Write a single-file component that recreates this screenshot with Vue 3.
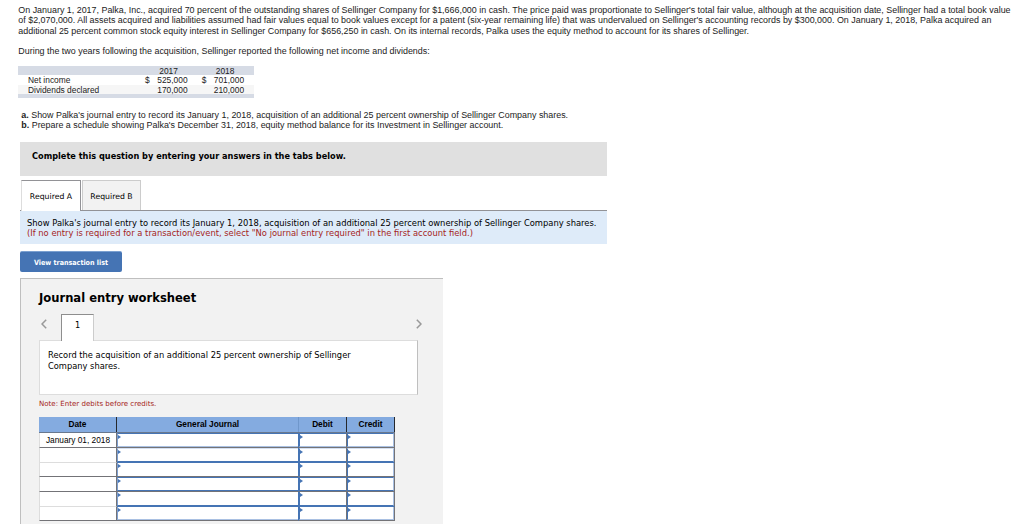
<script setup>
import { ref } from 'vue'

const intro = [
  "On January 1, 2017, Palka, Inc., acquired 70 percent of the outstanding shares of Sellinger Company for $1,666,000 in cash. The price paid was proportionate to Sellinger's total fair value, although at the acquisition date, Sellinger had a total book value",
  "of $2,070,000. All assets acquired and liabilities assumed had fair values equal to book values except for a patent (six-year remaining life) that was undervalued on Sellinger's accounting records by $300,000. On January 1, 2018, Palka acquired an",
  'additional 25 percent common stock equity interest in Sellinger Company for $656,250 in cash. On its internal records, Palka uses the equity method to account for its shares of Sellinger.',
]

const tabs = ['Required A', 'Required B']
const activeTab = ref('Required A')

const rows = [
  { id: 1, date: 'January 01, 2018' },
  { id: 2, date: '' },
  { id: 3, date: '' },
  { id: 4, date: '' },
  { id: 5, date: '' },
  { id: 6, date: '' },
]
const fields = ['account', 'debit', 'credit']
</script>

<template>
  <main class="page">
    <section class="problem">
      <p v-for="(line, i) in intro" :key="i">{{ line }}</p>
      <p class="lead">During the two years following the acquisition, Sellinger reported the following net income and dividends:</p>

      <div class="figures">
        <div class="fig-row fig-head"><span></span><span></span><span class="year">2017</span><span></span><span class="year">2018</span></div>
        <div class="fig-row"><span class="name">Net income</span><span>$</span><span>525,000</span><span>$</span><span>701,000</span></div>
        <div class="fig-row alt"><span class="name">Dividends declared</span><span></span><span>170,000</span><span></span><span>210,000</span></div>
        <div class="fig-foot"></div>
      </div>

      <p class="item item-a"><b>a.</b> Show Palka's journal entry to record its January 1, 2018, acquisition of an additional 25 percent ownership of Sellinger Company shares.</p>
      <p class="item"><b>b.</b> Prepare a schedule showing Palka's December 31, 2018, equity method balance for its Investment in Sellinger account.</p>
    </section>

    <section class="answer">
      <div class="banner">Complete this question by entering your answers in the tabs below.</div>
      <div class="tabs">
        <button v-for="tab in tabs" :key="tab" :class="{ active: tab === activeTab }" @click="activeTab = tab">{{ tab }}</button>
      </div>
      <div class="task">
        <p>Show Palka's journal entry to record its January 1, 2018, acquisition of an additional 25 percent ownership of Sellinger Company shares.</p>
        <p class="task-hint">(If no entry is required for a transaction/event, select "No journal entry required" in the first account field.)</p>
      </div>
      <button class="view-list">View transaction list</button>
    </section>

    <section class="worksheet">
      <h2>Journal entry worksheet</h2>
      <div class="pager">
        <svg class="prev" width="6" height="10" viewBox="0 0 6 10"><path d="M5.2 0.7 L1 5 L5.2 9.3" /></svg>
        <span class="page-tab">1</span>
        <svg class="next" width="6" height="10" viewBox="0 0 6 10"><path d="M0.8 0.7 L5 5 L0.8 9.3" /></svg>
      </div>
      <div class="record">
        <p>Record the acquisition of an additional 25 percent ownership of Sellinger</p>
        <p>Company shares.</p>
      </div>
      <p class="note">Note: Enter debits before credits.</p>

      <div class="journal">
        <div class="j-row j-head"><span>Date</span><span>General Journal</span><span>Debit</span><span>Credit</span></div>
        <div v-for="row in rows" :key="row.id" class="j-row" :class="'row-' + row.id">
          <div class="date">{{ row.date }}</div>
          <div v-for="field in fields" :key="field" class="cell" :class="field">
            <div class="field">
              <svg width="3" height="4" viewBox="0 0 3 4"><path d="M0 0 L3 2 L0 4 Z" /></svg>
            </div>
          </div>
        </div>
      </div>
    </section>
  </main>
</template>

<style>
body {
  background: #fff;
  overflow: hidden;
}
</style>

<style scoped>
* {
  box-sizing: border-box;
}

p, h2 {
  margin: 0;
  white-space: nowrap;
}

.page {
  width: 1024px;
  height: 524px;
  overflow: hidden;
  padding-top: 5px;
  font-family: "DejaVu Sans", Verdana, sans-serif;
  color: #000;
}

.problem {
  height: 137px;
  padding-left: 18.3px;
  font-family: "Liberation Sans", Arial, sans-serif;
  font-size: 8.91px;
  line-height: 10.3px;
  color: #222;
}

.lead {
  margin-top: 10px;
}

.figures {
  width: 236px;
  margin: 9.8px 0 0 -0.3px;
  font-size: 8.4px;
  line-height: 10px;
}

.fig-row {
  display: grid;
  grid-template-columns: 127px 12.3px 44.5px 12px 40px;
  height: 9.5px;
}

.fig-head, .fig-foot {
  background: #d6dbe5;
}

.alt {
  background: #f6f6f6;
}

.fig-foot {
  height: 4px;
}

.name {
  padding-left: 10px;
}

.year {
  padding-left: 2px;
}

.item {
  padding-left: 3px;
}

.item-a {
  margin-top: 11.4px;
}

.banner {
  width: 587px;
  height: 34px;
  margin-left: 20px;
  padding: 8px 12px;
  background: #e0e0e0;
  font-size: 8.2px;
  font-weight: bold;
  line-height: 12px;
}

.tabs {
  display: flex;
  gap: 1px;
  width: 587px;
  height: 35px;
  margin-left: 20px;
  padding: 4px 0 0 1px;
  border-bottom: 1px solid #929296;
}

.tabs button {
  width: 59px;
  height: 30px;
  padding: 1px 0 0;
  border: 1px solid #ccc;
  border-bottom: 0;
  background: #f2f2f2;
  font-family: inherit;
  font-size: 7.75px;
  color: #000;
}

.tabs button.active {
  width: 60px;
  height: 31px;
  padding: 0;
  border-color: #929296 #929296 #929296 #ddd;
  background: #fff;
}

.task {
  width: 587px;
  height: 33px;
  margin-left: 20px;
  padding: 7px 7px 0;
  background: #deebf9;
  font-size: 8.37px;
  line-height: 10.3px;
}

.task-hint {
  color: #a51e22;
}

.view-list {
  display: block;
  width: 102px;
  height: 21px;
  margin: 7px 0 0 20px;
  padding: 0;
  border: 0;
  border-top: 1px solid #7ba0d0;
  border-radius: 2px;
  background: #4574b4;
  color: #fff;
  font-family: "DejaVu Sans Condensed", "DejaVu Sans", sans-serif;
  font-size: 7.1px;
  font-weight: bold;
}

.worksheet {
  width: 423px;
  height: 260px;
  margin: 6px 0 0 20px;
  padding: 11px 0 0 18px;
  border-top: 1px solid #bfbfbf;
  border-left: 1px solid #bfbfbf;
  background: #f2f2f2;
}

h2 {
  font-size: 11.55px;
  line-height: 16px;
}

.pager {
  display: flex;
  align-items: flex-start;
  width: 382.5px;
  height: 26px;
  margin-top: 8px;
}

.pager svg {
  margin-top: 5px;
  fill: none;
  stroke: #999;
  stroke-width: 1.5;
}

.prev {
  margin-left: 2px;
}

.next {
  margin-left: auto;
}

.page-tab {
  position: relative;
  width: 33px;
  height: 27px;
  margin-left: 14px;
  border: 1px solid #8e8e8e;
  border-right-color: #ccc;
  border-bottom: 0;
  background: #fff;
  font-size: 8.2px;
  line-height: 21px;
  text-align: center;
}

.record {
  width: 379px;
  height: 55px;
  padding: 9px 8px;
  border: 1px solid #ddd;
  border-right-color: #bfbfbf;
  background: #fff;
  font-size: 8.3px;
  line-height: 11px;
}

.note {
  margin-top: 4px;
  color: #a51e22;
  font-size: 7.05px;
  line-height: 10px;
}

.journal {
  width: 356px;
  margin-top: 8px;
  font-family: "Liberation Sans", Arial, sans-serif;
  font-size: 8.3px;
}

.j-row {
  display: grid;
  grid-template-columns: 78px 182px 48px 48px;
  height: 15px;
}

.j-head {
  height: 16px;
  background: #84abe0;
  border-bottom: 1px solid #69788e;
  font-weight: bold;
  line-height: 15px;
  text-align: center;
}

.j-head span {
  border-right: 1px solid #26282c;
}

.j-head span:nth-child(2) {
  border-right-color: #6f97cb;
}

.date {
  border-left: 1px solid #ddd;
  border-right: 1px solid #737377;
  border-bottom: 1px solid #737377;
  background: #fff;
  line-height: 13px;
  text-align: center;
}

.row-1 .date {
  line-height: 14px;
}

.row-2 .date, .row-5 .date {
  border-bottom-color: #ddd;
}

.cell {
  border-right: 1px solid #737377;
  border-bottom: 1px solid #737377;
}

.account {
  border-right-color: #4574b4;
}

.field {
  height: 100%;
  padding-top: 1px;
  border-left: 1px solid #4574b4;
  background: #fff;
}

.account .field {
  border-left-color: #7d9fd0;
}

.credit .field {
  border-right: 1px solid #a9c0e2;
}

.field svg {
  display: block;
  fill: #4574b4;
}

.row-1 .field {
  border-top: 1px solid #4574b4;
  border-bottom: 1px solid #a9c0e2;
}

.row-2 .field {
  border-top: 1px solid #d5e0f1;
  border-bottom: 1px solid #4574b4;
}

.row-2 .cell, .row-5 .cell {
  border-bottom-color: #4574b4;
}

.row-3, .row-6 {
  height: 14px;
}

.row-4 .field {
  border-top: 1px solid #4574b4;
  border-bottom: 1px solid #4574b4;
}

.row-5 .field {
  border-bottom: 1px solid #4574b4;
}

.row-6 .field {
  border-bottom: 1px solid #a9c0e2;
}
</style>
